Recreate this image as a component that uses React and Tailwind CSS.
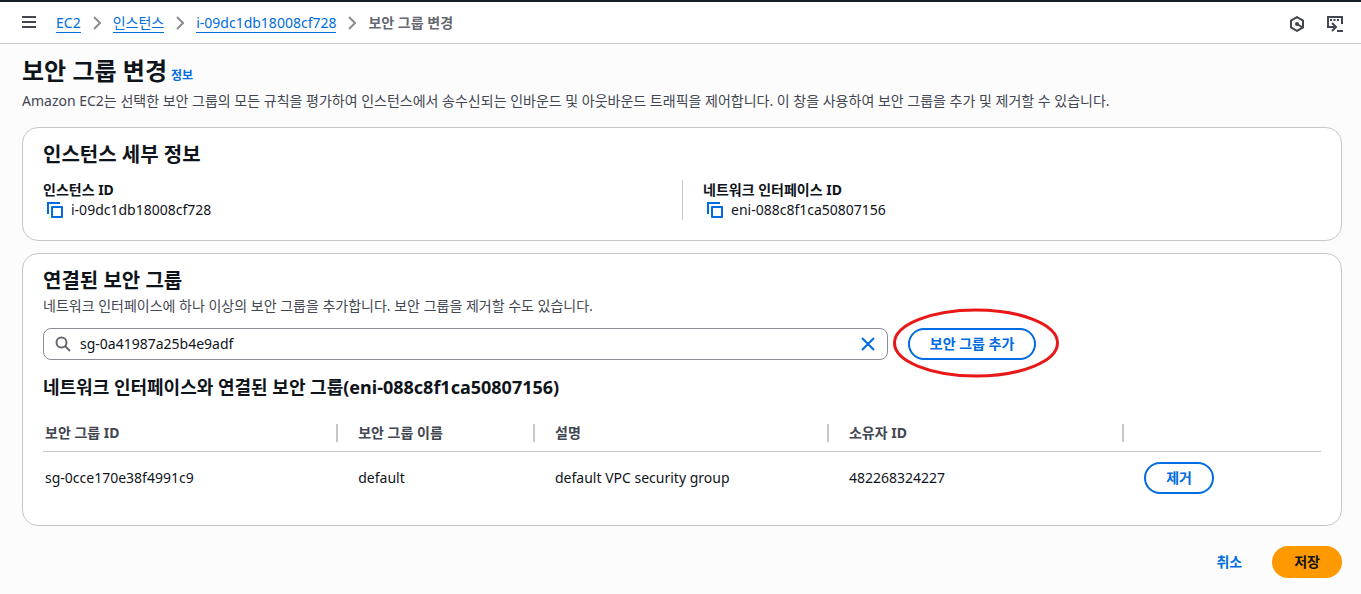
const GROUPS = [
  {
    id: 'sg-0cce170e38f4991c9',
    name: 'default',
    description: 'default VPC security group',
    owner: '482268324227',
  },
]

export default function App() {
  return (
    <div className="min-h-screen bg-[#fcfcfd] text-sm leading-5 text-[#0f141a] font-['Noto_Sans','Noto_Sans_CJK_KR',sans-serif]">
      <TopBar />
      <main className="pt-3 pr-[19px] pb-4 pl-[22px]">
        <div className="flex items-baseline gap-1">
          <h1 className="text-2xl leading-[30px] font-bold">보안 그룹 변경</h1>
          <a href="#info" className="text-xs font-bold text-[#006ce0]">정보</a>
        </div>
        <p className="mt-[5px] text-[#424650]">
          Amazon EC2는 선택한 보안 그룹의 모든 규칙을 평가하여 인스턴스에서 송수신되는 인바운드 및 아웃바운드 트래픽을 제어합니다. 이 창을 사용하여 보안 그룹을 추가 및 제거할 수 있습니다.
        </p>

        <Card className="mt-4 pb-5">
          <h2 className="text-xl leading-6 font-bold">인스턴스 세부 정보</h2>
          <dl className="mt-[13px] grid grid-cols-2">
            <Detail label="인스턴스 ID" value="i-09dc1db18008cf728" />
            <Detail label="네트워크 인터페이스 ID" value="eni-088c8f1ca50807156" className="border-l border-[#c6c6cd] pl-5" />
          </dl>
        </Card>

        <Card className="mt-3 pb-[21px]">
          <h2 className="text-xl leading-6 font-bold">연결된 보안 그룹</h2>
          <p className="mt-[3px] text-[#424650]">
            네트워크 인터페이스에 하나 이상의 보안 그룹을 추가합니다. 보안 그룹을 제거할 수도 있습니다.
          </p>
          <GroupSearch />
          <h3 className="mt-[15px] text-lg leading-6 font-bold">
            네트워크 인터페이스와 연결된 보안 그룹(eni-088c8f1ca50807156)
          </h3>
          <GroupTable />
        </Card>

        <div className="mt-5 flex justify-end gap-2">
          <button type="button" className="h-8 rounded-full px-[22px] font-bold text-[#006ce0]">취소</button>
          <button type="submit" className="h-8 rounded-full bg-[#ff9900] px-[22px] font-bold">저장</button>
        </div>
      </main>
    </div>
  )
}

function TopBar() {
  return (
    <header className="flex h-11 items-center border-t-2 border-b border-t-[#161d26] border-b-[#c6c6cd] bg-white pr-[18px] pl-[22px]">
      <button type="button" aria-label="메뉴" className="mr-5 pb-[2px] text-[#424650]">
        <svg width="14" height="14" viewBox="0 0 14 14" fill="none" stroke="currentColor" strokeWidth="2">
          <path d="M0 2h14M0 7h14M0 12h14" />
        </svg>
      </button>
      <nav aria-label="탐색 경로" className="flex flex-1 items-center gap-3">
        <Crumb>EC2</Crumb>
        <Chevron />
        <Crumb>인스턴스</Crumb>
        <Chevron />
        <Crumb>i-09dc1db18008cf728</Crumb>
        <Chevron />
        <span className="font-bold text-[#656871]">보안 그룹 변경</span>
      </nav>
      <div className="flex items-center gap-[22px] pt-[2px] text-[#424650]">
        <button type="button" aria-label="Amazon Q">
          <svg width="16" height="16" viewBox="0 0 16 16" fill="none" stroke="currentColor" strokeWidth="2">
            <path d="M8 1.1 14 4.6v6.8L8 14.9 2 11.4V4.6Z" />
            <circle cx="8" cy="8" r="2" fill="currentColor" stroke="none" />
            <path d="m8 8 5 3" />
          </svg>
        </button>
        <button type="button" aria-label="CloudShell">
          <svg width="16" height="16" viewBox="0 0 16 16" fill="none" stroke="currentColor" strokeWidth="2">
            <path d="M2 11H1V1h14v7" />
            <path d="M3 4h2M6.500 4h2M10 4h2" />
            <path d="M1 11h7M5 7l4 4-4 4" />
            <path d="M10 15h6" />
          </svg>
        </button>
      </div>
    </header>
  )
}

function Crumb({ children }) {
  return (
    <a href="#crumb" className="border-b border-[#006ce0] pt-px leading-[18px] text-[#006ce0]">{children}</a>
  )
}

function Chevron() {
  return (
    <svg width="8" height="14" viewBox="0 0 8 14" fill="none" stroke="#8c8c94" strokeWidth="2" aria-hidden="true">
      <path d="m1 1 6 6-6 6" />
    </svg>
  )
}

function Card({ className, children }) {
  return (
    <section className={`rounded-2xl border border-[#c6c6cd] bg-white px-5 pt-[15px] ${className}`}>
      {children}
    </section>
  )
}

function Detail({ label, value, className = '' }) {
  return (
    <div className={className}>
      <dt className="font-bold">{label}</dt>
      <dd className="flex items-center gap-2 pl-1">
        <button type="button" aria-label={`${label} 복사`} className="text-[#006ce0]">
          <svg width="16" height="16" viewBox="0 0 16 16" fill="none" stroke="currentColor" strokeWidth="2">
            <path d="M1 12V1h12" />
            <path d="M5 5h10v10H5z" strokeLinejoin="round" />
          </svg>
        </button>
        {value}
      </dd>
    </div>
  )
}

function GroupSearch() {
  return (
    <div className="mt-3 flex items-center gap-5">
      <div className="flex h-8 w-[66.1%] items-center rounded-lg border border-[#8c8c94] pr-3 pl-[11px]">
        <svg width="16" height="16" viewBox="0 0 16 16" fill="none" stroke="#656871" strokeWidth="2" aria-hidden="true">
          <circle cx="6.500" cy="6.500" r="5" />
          <path d="m10 10 5 5" />
        </svg>
        <input
          type="text"
          aria-label="보안 그룹 선택"
          defaultValue="sg-0a41987a25b4e9adf"
          className="ml-[9px] min-w-0 flex-1 bg-transparent outline-none"
        />
        <button type="button" aria-label="지우기" className="text-[#006ce0]">
          <svg width="14" height="14" viewBox="0 0 14 14" fill="none" stroke="currentColor" strokeWidth="2">
            <path d="m1 1 12 12M13 1 1 13" />
          </svg>
        </button>
      </div>
      <div className="relative">
        <OutlineButton>보안 그룹 추가</OutlineButton>
        <svg
          className="pointer-events-none absolute -top-5 -left-4"
          width="168"
          height="70"
          viewBox="0 0 168 70"
          fill="none"
          stroke="#e81818"
          strokeWidth="3"
          aria-hidden="true"
        >
          <ellipse cx="84" cy="35" rx="81.500" ry="33" />
        </svg>
      </div>
    </div>
  )
}

function OutlineButton({ children }) {
  return (
    <button type="button" className="h-8 rounded-full border-2 border-[#006ce0] bg-white px-5 font-bold whitespace-nowrap text-[#006ce0]">
      {children}
    </button>
  )
}

function GroupTable() {
  return (
    <table className="mt-4 w-full table-fixed text-left">
      <thead>
        <tr className="border-b border-[#c6c6cd] text-[#424650]">
          <HeadCell className="w-[23.1%] pl-[2px]">보안 그룹 ID</HeadCell>
          <HeadCell className="w-[15.4%] pl-5">보안 그룹 이름</HeadCell>
          <HeadCell className="w-[23%] pl-5">설명</HeadCell>
          <HeadCell className="w-[23.1%] pl-5">소유자 ID</HeadCell>
          <th aria-label="작업" />
        </tr>
      </thead>
      <tbody>
        {GROUPS.map((g) => (
          <tr key={g.id}>
            <td className="py-[10px] pl-[2px]">{g.id}</td>
            <td className="py-[10px] pl-5">{g.name}</td>
            <td className="py-[10px] pl-5">{g.description}</td>
            <td className="py-[10px] pl-5">{g.owner}</td>
            <td className="py-[10px] pl-5">
              <OutlineButton>제거</OutlineButton>
            </td>
          </tr>
        ))}
      </tbody>
    </table>
  )
}

function HeadCell({ className, children }) {
  return (
    <th className={`py-[9px] font-bold ${className}`}>
      <div className="border-r-2 border-[#c6c6cd] leading-[18px]">{children}</div>
    </th>
  )
}
